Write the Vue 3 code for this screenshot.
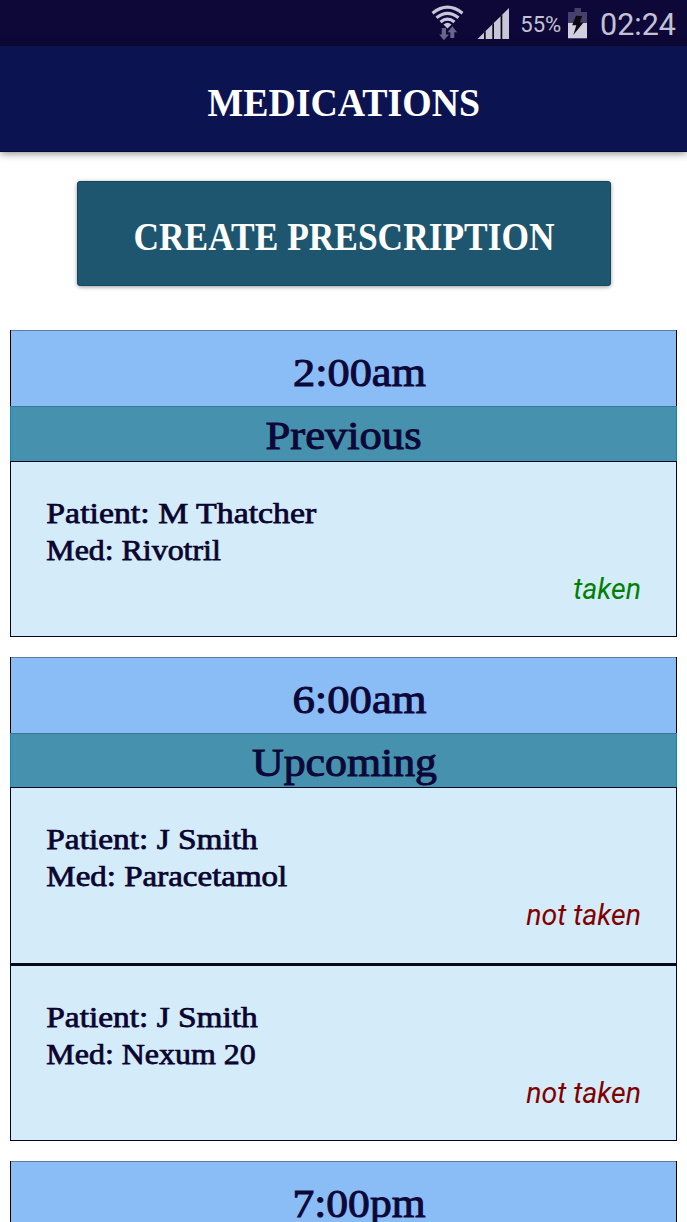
<script setup>
const groups = [
  {
    time: '2:00am', timeX: 293, timeW: 133,
    status: 'Previous', statusX: 265.5, statusW: 156,
    items: [
      { patient: 'Patient: M Thatcher', pw: 270, med: 'Med: Rivotril', mw: 174.5, taken: true }
    ]
  },
  {
    time: '6:00am', timeX: 292.5, timeW: 134,
    status: 'Upcoming', statusX: 252, statusW: 185,
    items: [
      { patient: 'Patient: J Smith', pw: 211.5, med: 'Med: Paracetamol', mw: 241, taken: false },
      { patient: 'Patient: J Smith', pw: 211.5, med: 'Med: Nexum 20', mw: 209.5, taken: false }
    ]
  },
  { time: '7:00pm', timeX: 292.5, timeW: 133, status: '', items: [] }
]
</script>

<template>
  <div class="screen">
    <div class="status-bar">
      <svg width="267" height="46" viewBox="0 0 267 46">
        <g fill="none" stroke="#c8c5d8" stroke-width="3.1">
          <path d="M12.5 13.2Q27.5 1.2 42.5 13.2" />
          <path d="M16.5 17.8Q27.5 8.8 38.5 17.8" />
          <path d="M20.5 22Q27.5 16.2 34.5 22" />
        </g>
        <path d="M23.5 24.5Q27.5 21.2 31.5 24.5L27.5 28.5Z" fill="#c8c5d8" />
        <path d="M21.8 28h4.2v6.5h3L23.9 40.3 19.2 34.5h2.6zM30.3 38h4v-5.7h2.8L32.3 26.2 27.6 32.3h2.7z" fill="#68648a" />
        <path d="M57.5 39L89 8V39Z" fill="#c8c5d8" />
        <g fill="#0b0716">
          <path d="M64 32.6l1.7-1.7V39H64z" />
          <path d="M72.3 24.4l1.7-1.7V39h-1.7z" />
          <path d="M80.6 16.3l1.7-1.7V39h-1.7z" />
        </g>
        <text class="percent" x="100.3" y="32.4" textLength="41" lengthAdjust="spacingAndGlyphs">55%</text>
        <path d="M148 23V12h6.5V8h6.5v4h6v11z" fill="#45406c" />
        <path d="M148 23h19v15.3h-19z" fill="#d2d0df" />
        <path d="M156 15.8l6.2.1-2.5 6.6h3.8L153.3 35l3-9.8h-4.1z" fill="#0b0a12" />
        <text class="clock" x="180" y="35" textLength="76" lengthAdjust="spacingAndGlyphs">02:24</text>
      </svg>
    </div>
    <header class="app-bar">
      <svg width="687" height="105">
        <text class="title" x="207.5" y="69.6" textLength="272.5" lengthAdjust="spacingAndGlyphs">MEDICATIONS</text>
      </svg>
    </header>
    <button class="create">
      <svg width="534" height="105">
        <text class="title" x="56.5" y="69" textLength="421" lengthAdjust="spacingAndGlyphs">CREATE PRESCRIPTION</text>
      </svg>
    </button>
    <main class="groups">
      <section v-for="g in groups" :key="g.time" class="group">
        <div class="time">
          <svg width="667" height="75">
            <text class="heading" :x="g.timeX - 10" y="56.2" :textLength="g.timeW" lengthAdjust="spacingAndGlyphs">{{ g.time }}</text>
          </svg>
        </div>
        <template v-if="g.items.length">
          <div class="state">
            <svg width="667" height="54">
              <text class="heading" :x="g.statusX - 10" y="43.2" :textLength="g.statusW" lengthAdjust="spacingAndGlyphs">{{ g.status }}</text>
            </svg>
          </div>
          <article v-for="item in g.items" :key="item.med" class="item">
            <svg width="480" height="110">
              <text class="detail" x="36.3" y="62.4" :textLength="item.pw" lengthAdjust="spacingAndGlyphs">{{ item.patient }}</text>
              <text class="detail" x="36.3" y="98.6" :textLength="item.mw" lengthAdjust="spacingAndGlyphs">{{ item.med }}</text>
            </svg>
            <div class="result" :class="{ done: item.taken }">{{ item.taken ? 'taken' : 'not taken' }}</div>
          </article>
        </template>
      </section>
    </main>
  </div>
</template>

<style scoped>
.screen {
  width: 687px;
  height: 1222px;
  overflow: hidden;
  background: #fff;
  font-family: "Liberation Serif", serif;
}
svg { display: block; overflow: visible; }
.status-bar {
  display: flex;
  justify-content: flex-end;
  height: 46px;
  background: #0e0839;
}
.percent, .clock {
  font-family: Roboto, sans-serif;
  fill: #c4c1d4;
}
.percent { font-size: 22.5px; }
.clock { font-size: 31.5px; }
.app-bar {
  box-sizing: border-box;
  height: 106.4px;
  background: #0c1351;
  border-bottom: 1px solid #08083d;
  box-shadow: 0 1px 8px rgba(0, 0, 0, 0.5);
}
.title {
  font-family: "Liberation Serif", serif;
  font-size: 41px;
  font-weight: 700;
  fill: #fff;
}
.create {
  display: block;
  width: 534px;
  height: 105px;
  margin: 29px auto 0 76.6px;
  padding: 0;
  border: 0;
  border-radius: 4px;
  background: #1e566f;
  box-shadow: inset 0 0 0 1px #124761, 0 1px 4px rgba(0, 0, 0, 0.4);
}
.groups {
  display: flex;
  flex-direction: column;
  gap: 20px;
  padding: 44px 10px 0;
}
.group { flex: none; }
.time {
  box-sizing: border-box;
  height: 76px;
  background: #8abdf6;
  box-shadow: inset 1px 0 #000, inset -1px 0 #000, inset 0 1px #5e7ba0;
}
.state {
  height: 54.5px;
  background: #4692ae;
  box-shadow: inset 0 1px #3e7495, inset 1px 0 #0d89ae, inset -1px 0 #0d89ae;
}
.item {
  box-sizing: border-box;
  height: 177px;
  border: 1.5px solid #080522;
  background: #d4ebf9;
}
.item:last-child { height: 176px; }
.item svg { margin: -1px 0 0 -1px; }
.item + .item:last-child { border-top-width: 2px; height: 176.5px; }
.heading {
  font-size: 40px;
  fill: #0e0839;
  stroke: #0e0839;
  stroke-width: 1px;
}
.detail {
  font-size: 29.5px;
  fill: #0a0530;
  stroke: #0a0530;
  stroke-width: 0.75px;
}
.result {
  padding-right: 35px;
  text-align: right;
  font: italic 28.5px/37px Roboto, sans-serif;
  color: #800000;
}
.result.done { color: #008000; }
</style>
